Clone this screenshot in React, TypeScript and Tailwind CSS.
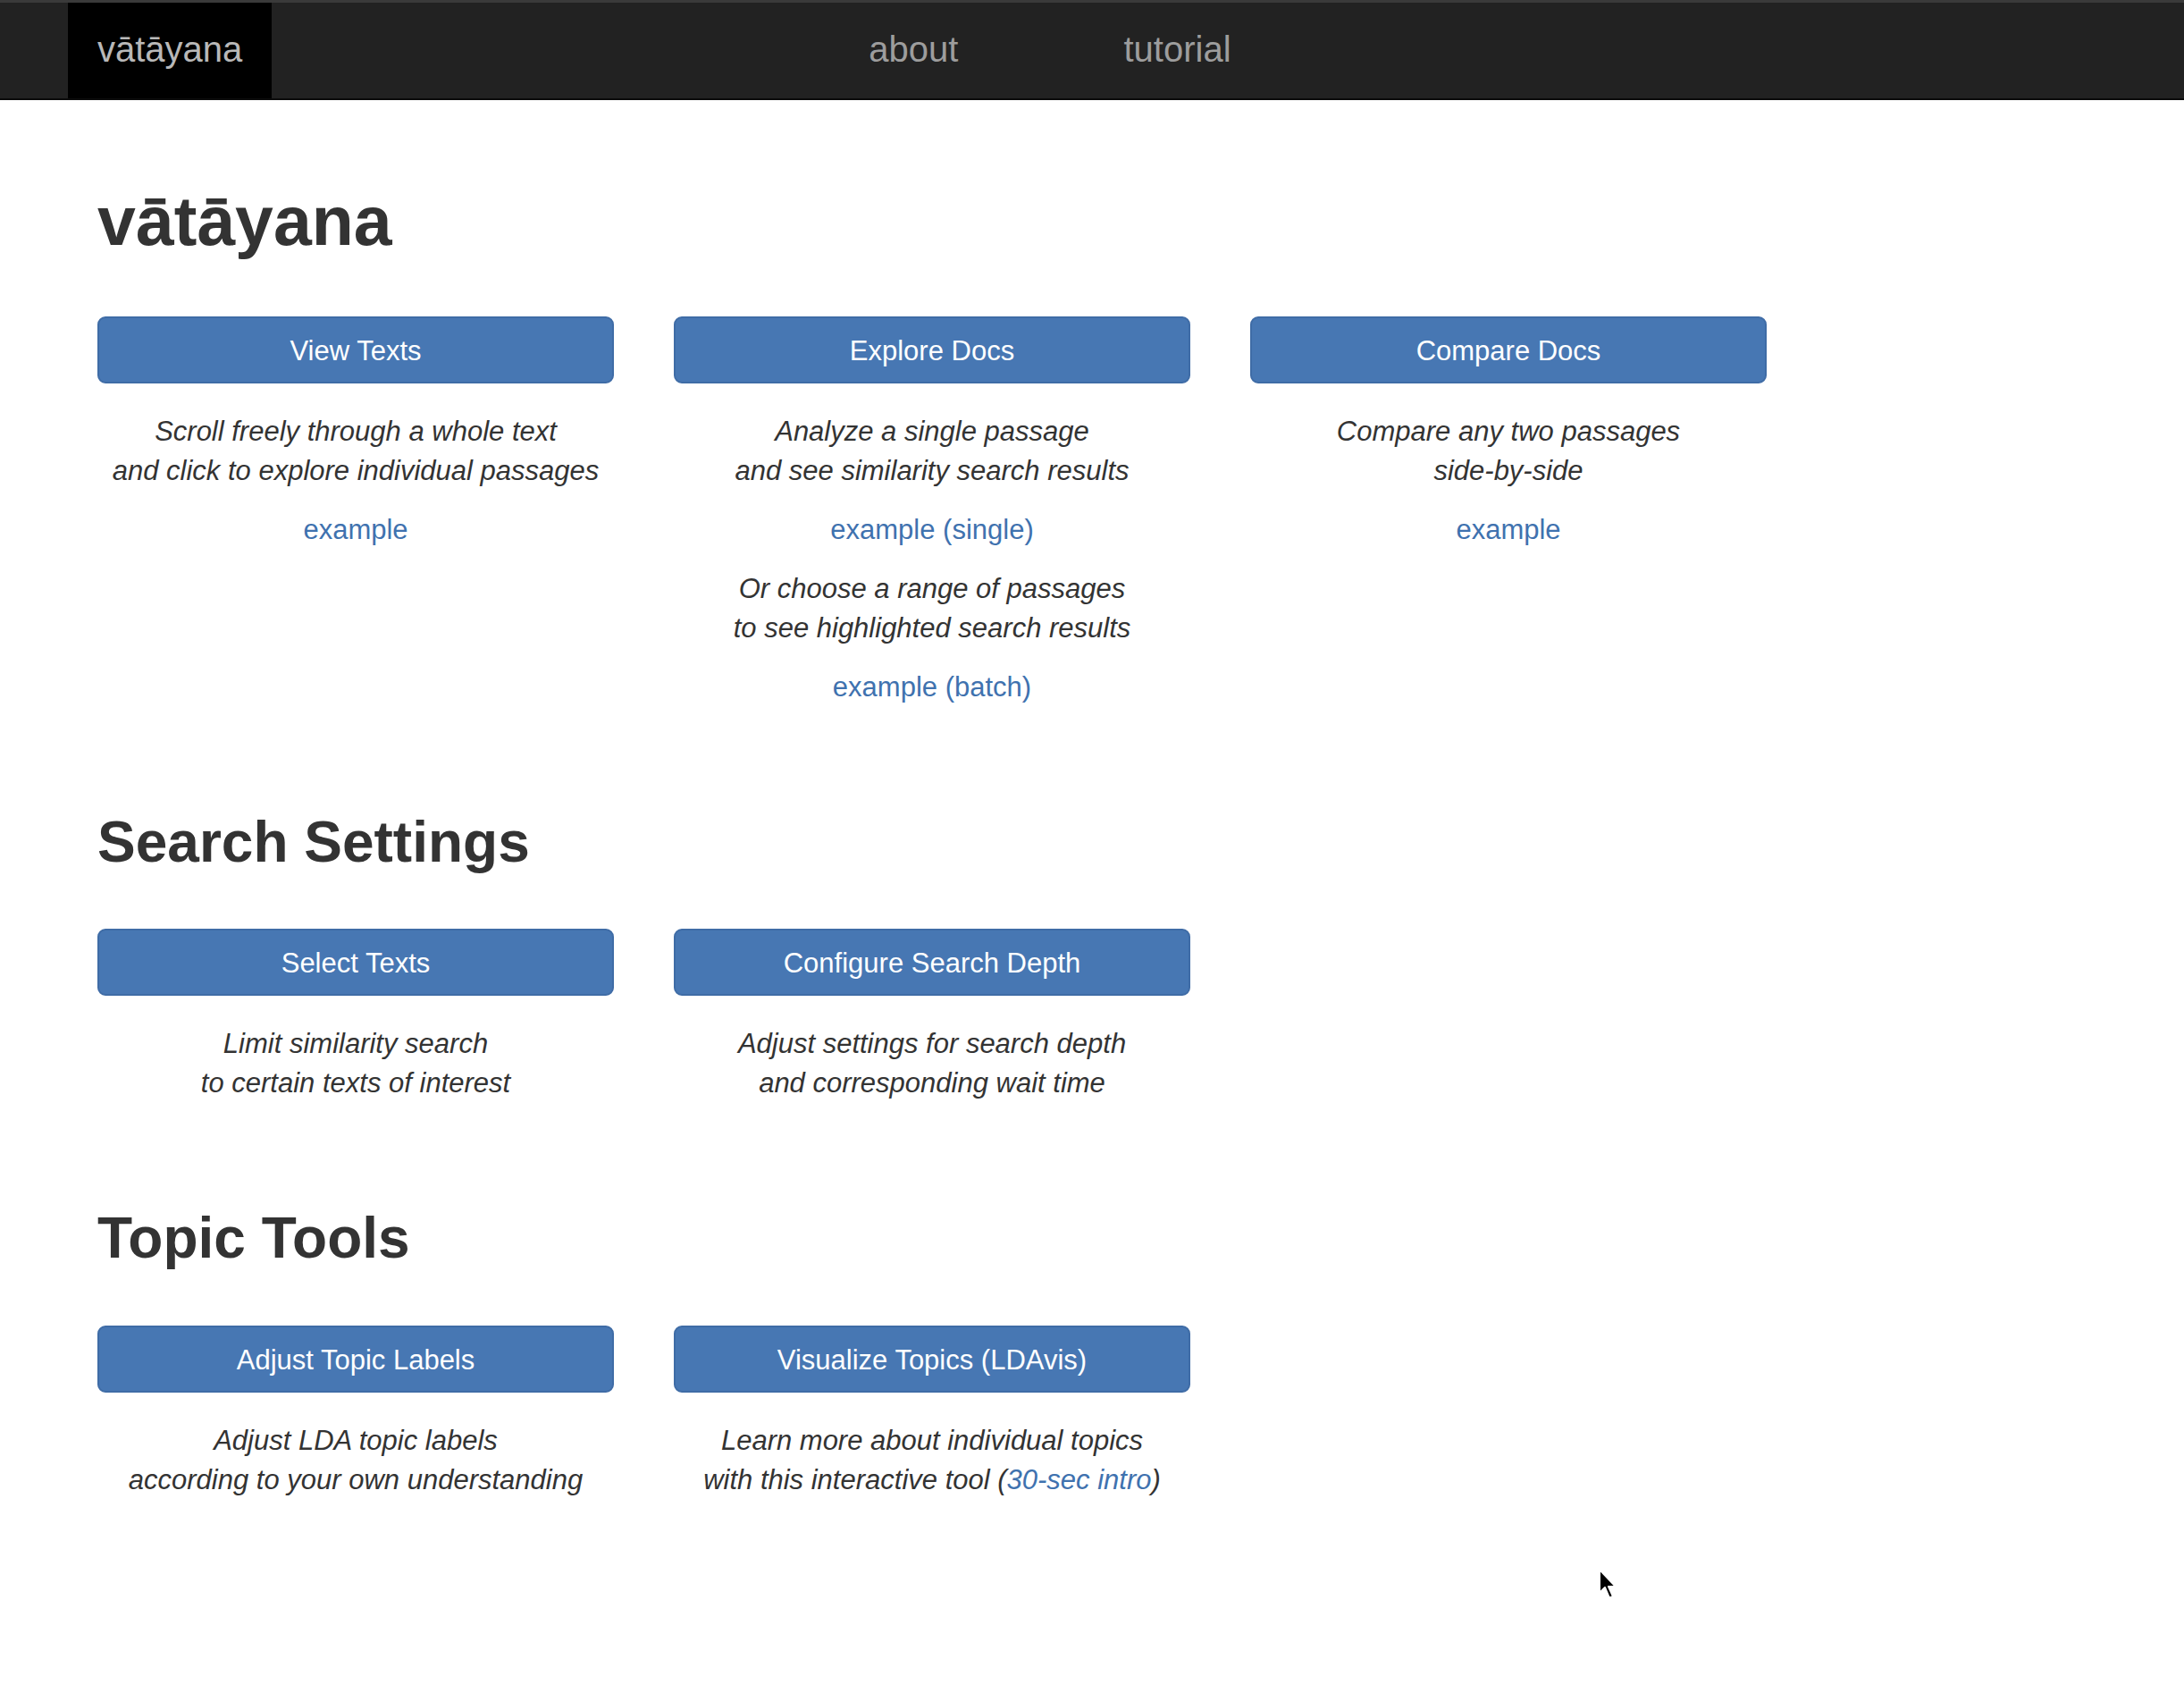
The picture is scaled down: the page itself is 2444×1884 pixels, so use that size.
import React from "react";

const font = { fontFamily: '"Liberation Sans", Arial, Helvetica, sans-serif' };

interface ToolProps {
  label: string;
  children: React.ReactNode;
}

function Tool({ label, children }: ToolProps) {
  return (
    <div className="w-[578px] flex flex-col items-center">
      <button className="w-full h-[75px] pt-[3px] rounded-[9px] border-2 border-[#3f6ca6] bg-[#4777b3] text-white text-[31px] leading-[44px]">
        {label}
      </button>
      <div className="mt-[32px] w-full text-center text-[31px] leading-[44px] text-[#333]">
        {children}
      </div>
    </div>
  );
}

function Desc({ children }: { children: React.ReactNode }) {
  return <p className="italic mb-[22px]">{children}</p>;
}

function Example({ children }: { children: React.ReactNode }) {
  return <p className="mb-[22px] text-[#3f72af]">{children}</p>;
}

function Cursor() {
  return (
    <svg
      className="absolute left-[1788px] top-[1754px]"
      width="24"
      height="38"
      viewBox="0 0 24 38"
    >
      <path
        d="M2 2 L2 28 L8 22 L13 34 L17 32 L12 21 L20 21 Z"
        fill="#000"
        stroke="#fff"
        strokeWidth="2"
        strokeLinejoin="round"
      />
    </svg>
  );
}

export default function App() {
  return (
    <div className="relative w-[2444px] h-[1884px] bg-white overflow-hidden" style={font}>
      {/* navbar */}
      <nav className="h-[112px] bg-[#222] border-t-[3px] border-[#3a3a3a] border-b-2 border-b-[#0b0b0b] flex items-stretch">
        <div className="ml-[76px] bg-black px-[33px] pb-[3px] flex items-center text-[40px] text-[#b8b8b8]">
          vātāyana
        </div>
        <div className="ml-[635px] px-[33px] pb-[3px] flex items-center text-[40px] text-[#9d9d9d]">
          about
        </div>
        <div className="ml-[119px] px-[33px] pb-[3px] flex items-center text-[40px] text-[#9d9d9d]">
          tutorial
        </div>
      </nav>

      <main className="pl-[109px]">
        <h1 className="mt-[93px] text-[77px] leading-[1.1] font-bold text-[#333]">vātāyana</h1>
        <div className="mt-[64px] flex gap-[67px] items-start">
          <Tool label="View Texts">
            <Desc>
              Scroll freely through a whole text
              <br />
              and click to explore individual passages
            </Desc>
            <Example>example</Example>
          </Tool>
          <Tool label="Explore Docs">
            <Desc>
              Analyze a single passage
              <br />
              and see similarity search results
            </Desc>
            <Example>example (single)</Example>
            <Desc>
              Or choose a range of passages
              <br />
              to see highlighted search results
            </Desc>
            <Example>example (batch)</Example>
          </Tool>
          <Tool label="Compare Docs">
            <Desc>
              Compare any two passages
              <br />
              side-by-side
            </Desc>
            <Example>example</Example>
          </Tool>
        </div>

        <h2 className="mt-[94px] text-[64px] leading-[1.1] font-bold text-[#333]">Search Settings</h2>
        <div className="mt-[62px] flex gap-[67px] items-start">
          <Tool label="Select Texts">
            <Desc>
              Limit similarity search
              <br />
              to certain texts of interest
            </Desc>
          </Tool>
          <Tool label="Configure Search Depth">
            <Desc>
              Adjust settings for search depth
              <br />
              and corresponding wait time
            </Desc>
          </Tool>
        </div>

        <h2 className="mt-[94px] text-[64px] leading-[1.1] font-bold text-[#333]">Topic Tools</h2>
        <div className="mt-[63px] flex gap-[67px] items-start">
          <Tool label="Adjust Topic Labels">
            <Desc>
              Adjust LDA topic labels
              <br />
              according to your own understanding
            </Desc>
          </Tool>
          <Tool label="Visualize Topics (LDAvis)">
            <Desc>
              Learn more about individual topics
              <br />
              with this interactive tool (<span className="text-[#3f72af]">30-sec intro</span>)
            </Desc>
          </Tool>
        </div>
      </main>

      <Cursor />
    </div>
  );
}
